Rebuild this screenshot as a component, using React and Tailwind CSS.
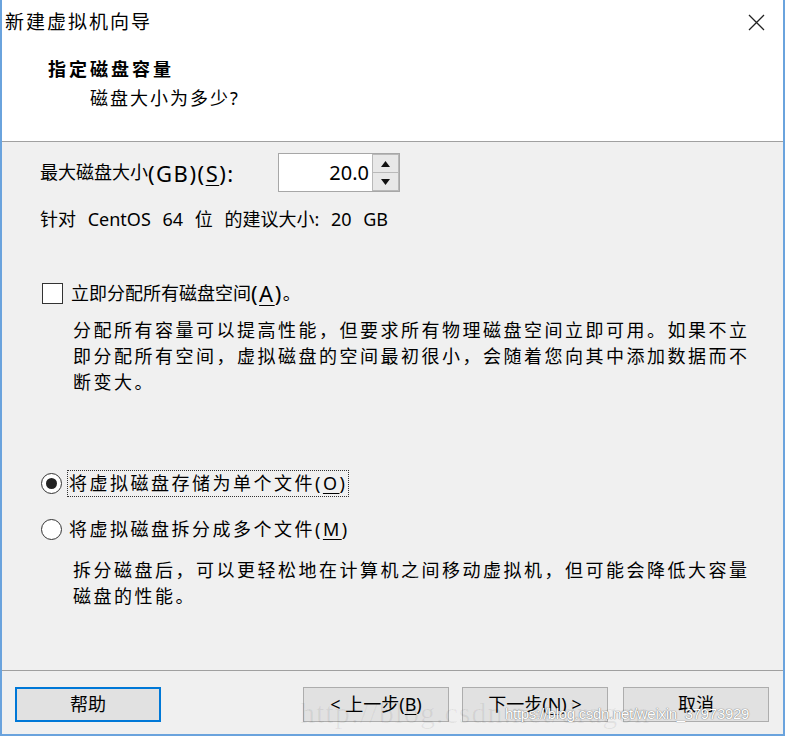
import React from 'react'

const FONT = 'font-["Noto_Sans","Noto_Sans_CJK_SC",sans-serif]'

function Key({ children }) {
  return <span className="underline underline-offset-[3px] decoration-1">{children}</span>
}

// accelerator part, drawn a bit larger in the original dialog
function Acc({ children }) {
  return <span className="text-[22px] tracking-[1.5px] leading-none">{children}</span>
}

function SpinBox({ value }) {
  return (
    <div className="w-[122px] h-[39px] bg-white border border-[#a7a7a7] flex">
      <div className="flex-1 flex items-center justify-end pr-[3px] text-[20px] text-black">{value}</div>
      <div className="w-[27px] flex flex-col">
        <div className="flex-1 bg-[#e8e8e8] border border-[#b9b9b9] flex items-center justify-center">
          <svg width="9" height="6" viewBox="0 0 9 6"><path d="M0 6 L4.5 0 L9 6 Z" fill="#111" /></svg>
        </div>
        <div className="flex-1 bg-[#e8e8e8] border border-t-0 border-[#b9b9b9] flex items-center justify-center">
          <svg width="9" height="6" viewBox="0 0 9 6"><path d="M0 0 L9 0 L4.5 6 Z" fill="#111" /></svg>
        </div>
      </div>
    </div>
  )
}

function Radio({ checked }) {
  return (
    <span className="w-[21px] h-[21px] rounded-full border border-[#333] bg-white flex items-center justify-center shrink-0">
      {checked && <span className="w-[11px] h-[11px] rounded-full bg-[#222]" />}
    </span>
  )
}

function Button({ children, focused }) {
  return (
    <button
      className={`w-[146px] h-[35px] bg-[#e1e1e1] text-[18px] text-black flex items-center justify-center ${
        focused ? 'border-2 border-[#0078d7]' : 'border border-[#adadad]'
      }`}
    >
      {children}
    </button>
  )
}

export default function App() {
  return (
    <div className={`w-[787px] h-[736px] bg-white ${FONT} text-black relative overflow-hidden`}>
      <div className="w-[785px] h-[736px] border-l-2 border-r-2 border-b-2 border-[#6aa3dd] flex flex-col">
        {/* Title bar */}
        <div className="h-[44px] flex items-center justify-between pl-[3px] pr-[18px] shrink-0">
          <span className="text-[19px] tracking-[2px]">新建虚拟机向导</span>
          <svg width="17" height="17" viewBox="0 0 17 17">
            <path d="M1 1 L16 16 M16 1 L1 16" stroke="#222" strokeWidth="1.3" />
          </svg>
        </div>

        {/* Header */}
        <div className="h-[98px] border-b border-[#a0a0a0] pt-[12px] shrink-0">
          <div className="pl-[46px] h-[26px] flex items-center text-[18px] font-bold tracking-[3px]">指定磁盘容量</div>
          <div className="pl-[88px] mt-[3px] h-[26px] flex items-center text-[18px] tracking-[2px]">磁盘大小为多少?</div>
        </div>

        {/* Body */}
        <div className="flex-1 bg-[#f0f0f0] flex flex-col text-[18px]">
          <div className="mt-[11px] h-[39px] flex items-center pl-[38px]">
            <span className="w-[238px] flex items-center">
              最大磁盘大小<Acc>(GB)(<Key>S</Key>):</Acc>
            </span>
            <SpinBox value="20.0" />
          </div>
          <div className="mt-[14px] h-[26px] flex items-center pl-[38px] [word-spacing:7px]">
            针对 CentOS 64 位 的建议大小: 20 GB
          </div>

          <div className="mt-[48px] h-[26px] flex items-center pl-[40px]">
            <span className="w-[21px] h-[21px] border border-[#333] bg-white shrink-0" />
            <span className="ml-[8px] flex items-center">
              立即分配所有磁盘空间<Acc>(<Key>A</Key>)</Acc>。
            </span>
          </div>
          <div className="mt-[11px] pl-[71px] pr-[20px] leading-[26px] tracking-[2.5px]">
            <div>分配所有容量可以提高性能，但要求所有物理磁盘空间立即可用。如果不立</div>
            <div>即分配所有空间，虚拟磁盘的空间最初很小，会随着您向其中添加数据而不</div>
            <div>断变大。</div>
          </div>

          <div className="mt-[75px] h-[27px] flex items-center pl-[39px]">
            <Radio checked />
            <span className="ml-[5px] h-[27px] pl-[1px] pr-[1px] flex items-center border border-dotted border-[#333] tracking-[2.5px]">
              将虚拟磁盘存储为单个文件(<Key>O</Key>)
            </span>
          </div>
          <div className="mt-[19px] h-[27px] flex items-center pl-[39px]">
            <Radio />
            <span className="ml-[7px] tracking-[2.5px]">
              将虚拟磁盘拆分成多个文件(<Key>M</Key>)
            </span>
          </div>
          <div className="mt-[14px] pl-[71px] pr-[20px] leading-[26px] tracking-[2.5px]">
            <div>拆分磁盘后，可以更轻松地在计算机之间移动虚拟机，但可能会降低大容量</div>
            <div>磁盘的性能。</div>
          </div>
        </div>

        {/* Footer */}
        <div className="h-[64px] border-t border-[#a0a0a0] bg-[#f0f0f0] flex items-start pt-[16px] pl-[13px] pr-[14px] shrink-0">
          <Button focused>帮助</Button>
          <div className="ml-auto flex">
            <Button>
              &lt; 上一步(<Key>B</Key>)
            </Button>
            <div className="ml-[13px]">
              <Button>
                下一步(<Key>N</Key>) &gt;
              </Button>
            </div>
            <div className="ml-[15px]">
              <Button>取消</Button>
            </div>
          </div>
        </div>
      </div>

      {/* Watermarks */}
      <div className="absolute left-[300px] top-[690px] text-[30px] font-['Liberation_Serif',serif] text-black/[0.06] tracking-[1px] whitespace-nowrap pointer-events-none">
        http://blog.csdn.net/dragon
      </div>
      <div className="absolute left-[505px] top-[703px] text-[15px] font-['Liberation_Sans',sans-serif] tracking-[-0.3px] text-white whitespace-nowrap pointer-events-none [text-shadow:0_0_1px_#777,0_0_1px_#777]">
        https://blog.csdn.net/weixin_37973929
      </div>
    </div>
  )
}
